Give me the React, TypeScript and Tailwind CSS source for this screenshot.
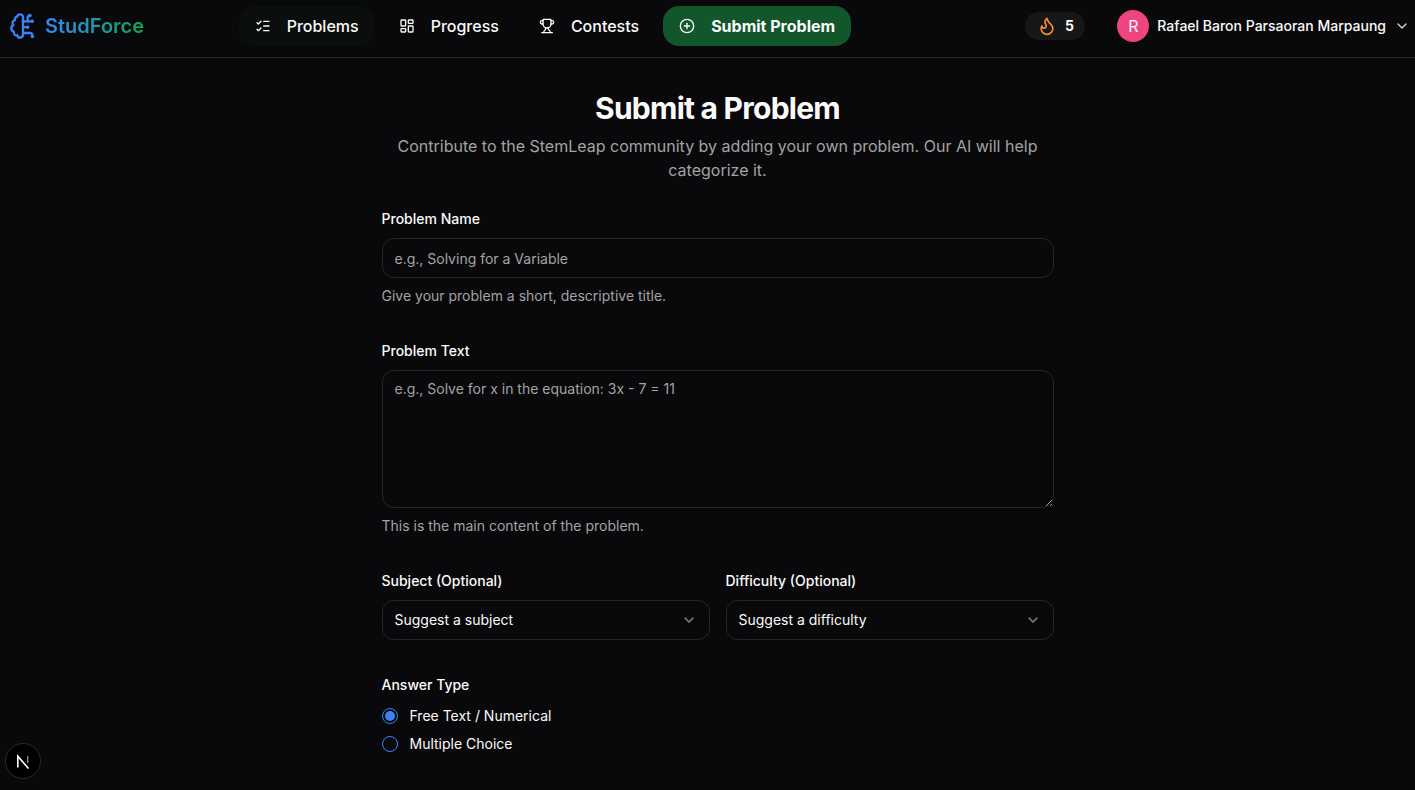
import { LayoutDashboard, ListChecks, Trophy, CirclePlus, Flame, ChevronDown } from "lucide-react";

const font = { fontFamily: "Inter, 'Liberation Sans', sans-serif" };

function BrainLogo() {
  return (
    <svg className="h-7 w-7 text-[#3b82f6]" viewBox="0 0 24 24" fill="none" stroke="currentColor" strokeWidth="2" strokeLinecap="round" strokeLinejoin="round">
      <path d="M12 4.5a2.5 2.5 0 0 0-4.96-.46 2.5 2.5 0 0 0-1.98 3 2.5 2.5 0 0 0-1.32 4.24 3 3 0 0 0 .34 5.58 2.5 2.5 0 0 0 2.96 3.08 2.5 2.5 0 0 0 4.91.05L12 20V4.5Z" />
      <path d="M16 8V5c0-1.1.9-2 2-2" />
      <path d="M12 13h4" />
      <path d="M12 18h6a2 2 0 0 1 2 2v1" />
      <path d="M12 8h8" />
      <path d="M20.5 8a.5.5 0 1 1-1 0 .5.5 0 0 1 1 0Z" />
      <path d="M16.5 13a.5.5 0 1 1-1 0 .5.5 0 0 1 1 0Z" />
      <path d="M20.5 21a.5.5 0 1 1-1 0 .5.5 0 0 1 1 0Z" />
      <path d="M18.5 3a.5.5 0 1 1-1 0 .5.5 0 0 1 1 0Z" />
    </svg>
  );
}

function NavItem({ icon, label, active }: { icon: React.ReactNode; label: string; active?: boolean }) {
  return (
    <a className={`flex h-10 items-center gap-4 rounded-2xl px-4 text-base font-medium text-[#fafafa] ${active ? "bg-[#0a0f0d]" : ""}`}>
      {icon}
      {label}
    </a>
  );
}

function Select({ label, value, className }: { label: string; value: string; className: string }) {
  return (
    <div className={`flex flex-col gap-[9px] ${className}`}>
      <label className="text-sm leading-[20px] font-medium text-[#fafafa]">{label}</label>
      <button className="flex h-10 items-center justify-between rounded-xl border border-[#262626] px-3 text-sm text-[#fafafa]">
        {value}
        <ChevronDown className="h-4 w-4 text-[#8a8a8a]" />
      </button>
    </div>
  );
}

function Radio({ label, checked }: { label: string; checked?: boolean }) {
  return (
    <div className="flex h-4 items-center gap-3 text-sm text-[#fafafa]">
      <span className="flex h-4 w-4 items-center justify-center rounded-full border border-[#3b82f6]">
        {checked && <span className="h-2.5 w-2.5 rounded-full bg-[#3b82f6]" />}
      </span>
      {label}
    </div>
  );
}

export default function App() {
  return (
    <div style={font} className="h-screen overflow-hidden bg-[#09090b] text-[#fafafa]">
      <header className="flex h-[58px] items-center justify-between border-b border-[#262626] pr-[5px] pb-[5px] pl-[9px]">
        <div className="flex items-center">
          <div className="flex items-center gap-2">
            <BrainLogo />
            <span className="bg-gradient-to-r from-[#3b82f6] to-[#16a34a] bg-clip-text text-xl font-semibold text-transparent">
              StudForce
            </span>
          </div>
          <nav className="ml-[94.6px] flex items-center gap-2">
            <NavItem active icon={<ListChecks className="h-4 w-4" />} label="Problems" />
            <NavItem icon={<LayoutDashboard className="h-4 w-4" />} label="Progress" />
            <NavItem icon={<Trophy className="h-4 w-4" />} label="Contests" />
            <a className="flex h-10 items-center gap-4 rounded-2xl bg-[#11572b] px-4 text-base font-bold text-[#fafafa]">
              <CirclePlus className="h-4 w-4" />
              Submit Problem
            </a>
          </nav>
        </div>
        <div className="flex items-center gap-8">
          <div className="flex h-7 w-[60px] items-center justify-center gap-2 rounded-full bg-[#171717]">
            <Flame className="h-5 w-5 text-[#f28c38]" />
            <span className="text-sm font-bold">5</span>
          </div>
          <div className="flex items-center gap-2">
            <span className="flex h-8 w-8 items-center justify-center rounded-full bg-[#ee4580] text-base">R</span>
            <span className="text-sm font-medium">Rafael Baron Parsaoran Marpaung</span>
            <ChevronDown className="h-4 w-4 text-[#d4d4d4]" />
          </div>
        </div>
      </header>
      <main className="pl-5">
        <div className="mx-auto flex w-[672px] flex-col">
          <h1 className="mt-[32px] text-center text-3xl leading-[36px] font-bold tracking-tight">Submit a Problem</h1>
          <p className="mt-2 text-center text-base leading-6 text-[#a3a3a3]">
            Contribute to the StemLeap community by adding your own problem. Our AI will help categorize it.
          </p>
          <label className="mt-[27px] text-sm leading-[20px] font-medium">Problem Name</label>
          <input
            className="mt-[9px] h-10 rounded-xl border border-[#262626] bg-transparent px-3 text-sm outline-none placeholder:text-[#a3a3a3]"
            placeholder="e.g., Solving for a Variable"
          />
          <p className="mt-2 text-sm leading-[20px] text-[#a3a3a3]">Give your problem a short, descriptive title.</p>
          <label className="mt-[35px] text-sm leading-[20px] font-medium">Problem Text</label>
          <textarea
            className="mt-[9px] h-[138px] rounded-xl border border-[#262626] bg-transparent px-3 py-2 text-sm outline-none placeholder:text-[#a3a3a3]"
            placeholder="e.g., Solve for x in the equation: 3x - 7 = 11"
          />
          <p className="mt-2 text-sm leading-[20px] text-[#a3a3a3]">This is the main content of the problem.</p>
          <div className="mt-[35px] flex gap-4">
            <Select className="w-[328px]" label="Subject (Optional)" value="Suggest a subject" />
            <Select className="w-[328px]" label="Difficulty (Optional)" value="Suggest a difficulty" />
          </div>
          <label className="mt-[35px] text-sm leading-[20px] font-medium">Answer Type</label>
          <div className="mt-[13px] flex flex-col gap-3">
            <Radio checked label="Free Text / Numerical" />
            <Radio label="Multiple Choice" />
          </div>
        </div>
      </main>
      <div className="fixed bottom-[11px] left-[5px] flex h-9 w-9 items-center justify-center rounded-full border border-[#2a2a2a] bg-black">
        <svg width="16" height="16" viewBox="0 0 16 16" fill="none">
          <path d="M2.8 14.5V3.2L13.5 15.5" stroke="#fff" strokeWidth="1.6" />
          <path d="M12.7 3V10" stroke="#888" strokeWidth="1.4" />
        </svg>
      </div>
    </div>
  );
}
